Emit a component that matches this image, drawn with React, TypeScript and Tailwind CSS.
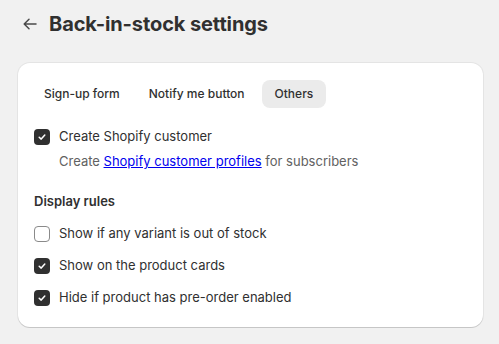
import { useState } from 'react'

const tabs = ['Sign-up form', 'Notify me button', 'Others']

function Check({ checked }: { checked: boolean }) {
  if (!checked) {
    return <span className="w-4 h-4 rounded-[4px] border border-[#8a8a8a] bg-white shrink-0" />
  }
  return (
    <span className="w-4 h-4 rounded-[4px] bg-[#303030] shrink-0 flex items-center justify-center">
      <svg width="10" height="10" viewBox="0 0 10 10" fill="none">
        <path d="M2.2 5.2 L4.2 7.1 L7.8 3" stroke="white" strokeWidth="1.5" strokeLinecap="round" strokeLinejoin="round" />
      </svg>
    </span>
  )
}

function Row({ label, checked }: { label: string; checked: boolean }) {
  return (
    <div className="flex items-center gap-[9px] h-8">
      <Check checked={checked} />
      <span className="text-[13px] text-[#303030]">{label}</span>
    </div>
  )
}

export default function App() {
  const [active] = useState(2)

  return (
    <div className="min-h-screen bg-[#f1f1f1] font-['Inter',sans-serif] pb-4">
      <header className="flex items-center h-12 pl-[23px] gap-3">
        <svg width="14" height="12" viewBox="0 0 14 12" fill="none" className="text-[#4a4a4a]">
          <path d="M13 6H1.5M6 1.2 1.2 6 6 10.8" stroke="currentColor" strokeWidth="1.5" strokeLinecap="round" strokeLinejoin="round" />
        </svg>
        <h1 className="text-[20px] font-bold text-[#303030] tracking-[-0.1px]">Back-in-stock settings</h1>
      </header>

      <div className="ml-[18px] mt-[15px] w-[465px] bg-white rounded-xl shadow-[0_1px_0_0_rgba(0,0,0,0.13),0_0_0_1px_rgba(0,0,0,0.05)] px-4 pt-[17px] pb-[13px]">
        <div className="flex gap-[5px] -ml-[2px]">
          {tabs.map((t, i) => (
            <button
              key={t}
              className={`h-7 rounded-lg text-[12px] font-medium text-[#303030] ${i === active ? 'bg-[#ebebeb] px-[13px]' : 'px-3'}`}
            >
              {t}
            </button>
          ))}
        </div>

        <div className="mt-[13px]">
          <Row label="Create Shopify customer" checked />
          <p className="pl-[25px] text-[13px] text-[#616161] -mt-[1px]">
            Create{' '}
            <a href="#" className="text-[#0000ee] underline">
              Shopify customer profiles
            </a>{' '}
            for subscribers
          </p>
        </div>

        <h2 className="mt-[20px] text-[13px] font-semibold text-[#303030]">Display rules</h2>
        <div className="mt-[7px]">
          <Row label="Show if any variant is out of stock" checked={false} />
          <Row label="Show on the product cards" checked />
          <Row label="Hide if product has pre-order enabled" checked />
        </div>
      </div>
    </div>
  )
}
